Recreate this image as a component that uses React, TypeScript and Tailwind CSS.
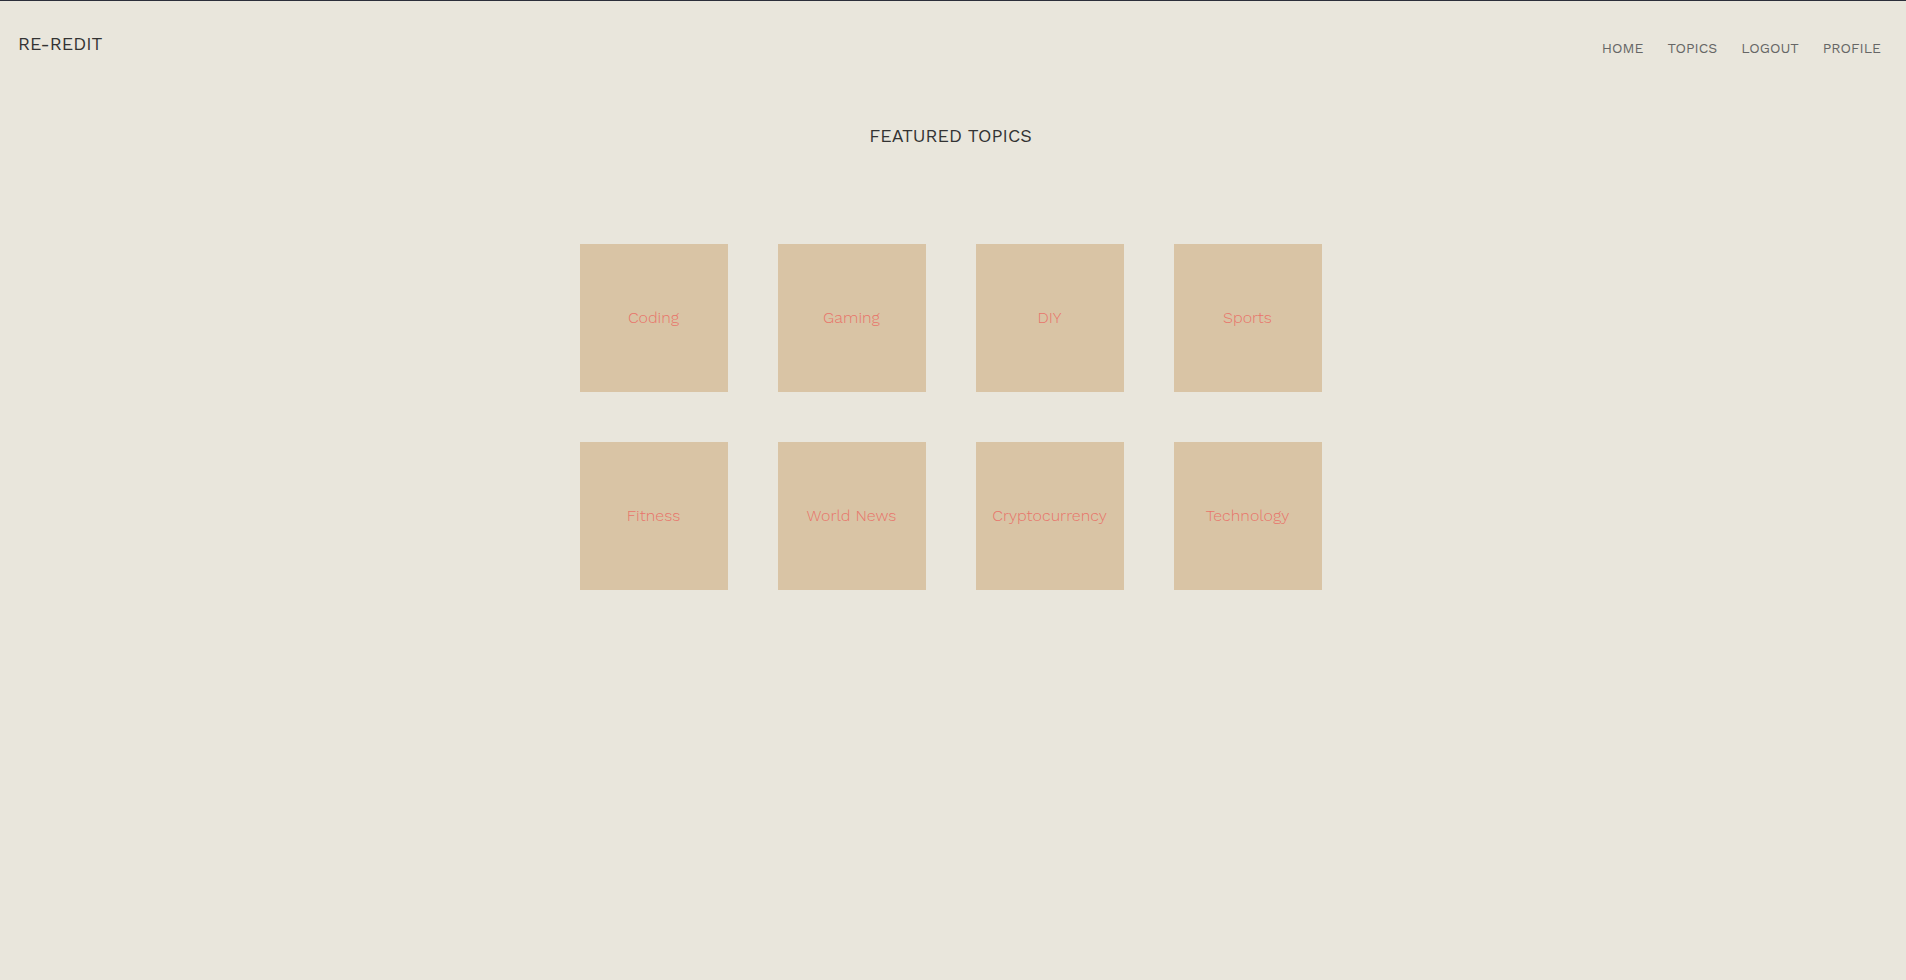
const topics = ['Coding', 'Gaming', 'DIY', 'Sports', 'Fitness', 'World News', 'Cryptocurrency', 'Technology'];
const links = ['HOME', 'TOPICS', 'LOGOUT', 'PROFILE'];

export default function App() {
  return (
    <div
      className="h-screen overflow-hidden bg-[#e9e6dc] border-t border-[#2b2e3a] pr-[5px]"
      style={{ fontFamily: '"Work Sans", Inter, "Open Sans", sans-serif' }}
    >
      {/* Header */}
      <header className="flex items-start justify-between pl-[18px] pr-[20px] pt-[34px]">
        <div className="text-[18px] text-[#333] leading-none">RE-REDIT</div>
        <nav className="flex gap-[24px] pt-[6px]">
          {links.map(link => (
            <a key={link} className="text-[14px] text-[#666] leading-none cursor-pointer">
              {link}
            </a>
          ))}
        </nav>
      </header>

      {/* Featured topics */}
      <h1 className="text-center text-[18px] text-[#333] leading-none mt-[72px]">FEATURED TOPICS</h1>

      <div className="grid grid-cols-[repeat(4,148px)] gap-[50px] justify-center mt-[99px]">
        {topics.map(topic => (
          <div
            key={topic}
            className="w-[148px] h-[148px] bg-[#d9c4a5] flex items-center justify-center text-[16px] font-light text-[#e8746a] cursor-pointer"
          >
            {topic}
          </div>
        ))}
      </div>
    </div>
  );
}
